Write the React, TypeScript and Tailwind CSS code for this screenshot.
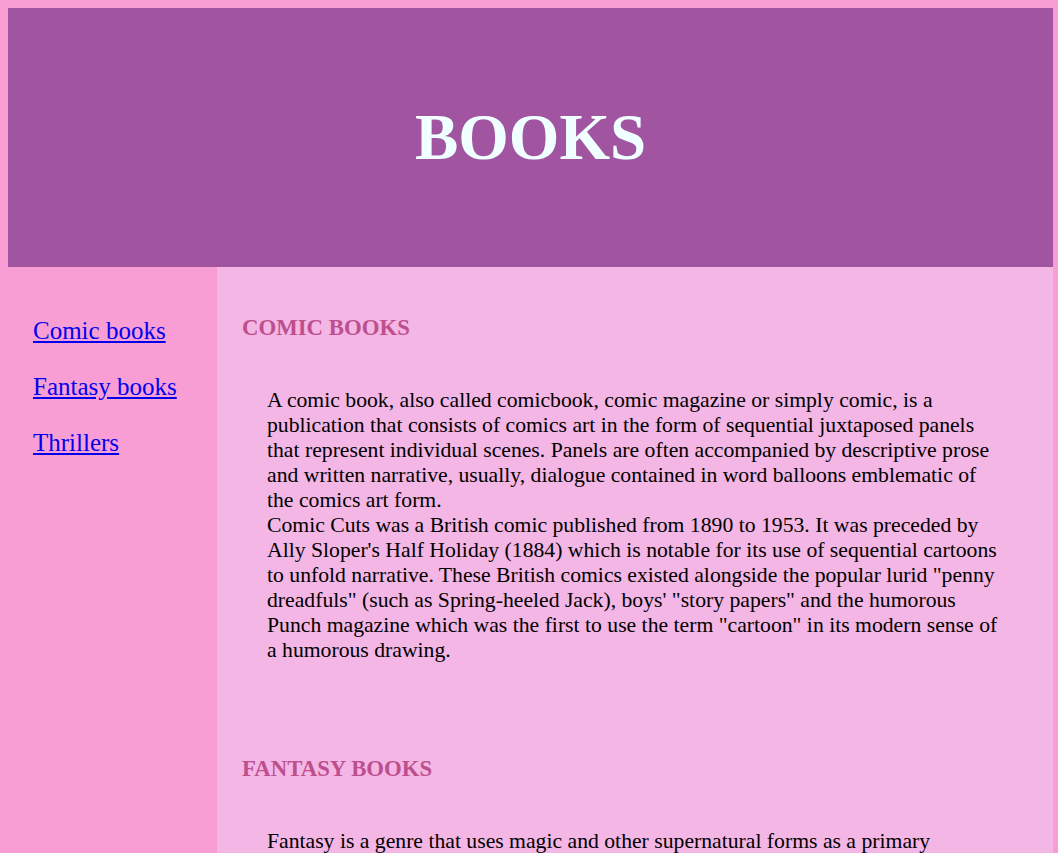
import React from "react";

const links = ["Comic books", "Fantasy books", "Thrillers"];

const sections = [
  {
    title: "COMIC BOOKS",
    body: [
      "A comic book, also called comicbook, comic magazine or simply comic, is a publication that consists of comics art in the form of sequential juxtaposed panels that represent individual scenes. Panels are often accompanied by descriptive prose and written narrative, usually, dialogue contained in word balloons emblematic of the comics art form.",
      "Comic Cuts was a British comic published from 1890 to 1953. It was preceded by Ally Sloper's Half Holiday (1884) which is notable for its use of sequential cartoons to unfold narrative. These British comics existed alongside the popular lurid \"penny dreadfuls\" (such as Spring-heeled Jack), boys' \"story papers\" and the humorous Punch magazine which was the first to use the term \"cartoon\" in its modern sense of a humorous drawing.",
    ],
  },
  {
    title: "FANTASY BOOKS",
    body: [
      "Fantasy is a genre that uses magic and other supernatural forms as a primary element of plot, theme, and/or setting. Fantasy is generally distinguished from science fiction and horror by the expectation that it steers clear of technological and macabre themes, respectively, though there is a great deal of overlap between the three.",
    ],
  },
];

export default function App() {
  return (
    <div className="min-h-[853px] bg-[#f99dd5] pl-[8px] pr-[5px] pt-[8px] font-['Liberation_Serif',serif]">
      <header className="flex h-[259px] items-center justify-center bg-[#a155a0]">
        <h1 className="text-[65px] font-bold leading-none text-[#f0ffff]">BOOKS</h1>
      </header>
      <div className="flex min-h-[586px]">
        <nav className="w-[209px] shrink-0 pl-[25px] pt-[49px]">
          <ul className="flex flex-col gap-[27px]">
            {links.map((l) => (
              <li key={l} className="text-[25px] leading-[29px]">
                <a href="#" className="text-[#0000ee] underline">
                  {l}
                </a>
              </li>
            ))}
          </ul>
        </nav>
        <main className="flex flex-1 flex-col gap-[93px] bg-[#f4b6e4] px-[25px] pt-[48px] pb-[40px]">
          {sections.map((s) => (
            <section key={s.title}>
              <h3 className="text-[22.8px] font-bold leading-[26px] text-[#bd4f8e]">{s.title}</h3>
              <p className="mx-[25px] mt-[47px] text-[21.7px] leading-[25px] text-black">
                {s.body.map((t, i) => (
                  <React.Fragment key={i}>
                    {i > 0 && <br />}
                    {t}
                  </React.Fragment>
                ))}
              </p>
            </section>
          ))}
        </main>
      </div>
    </div>
  );
}
